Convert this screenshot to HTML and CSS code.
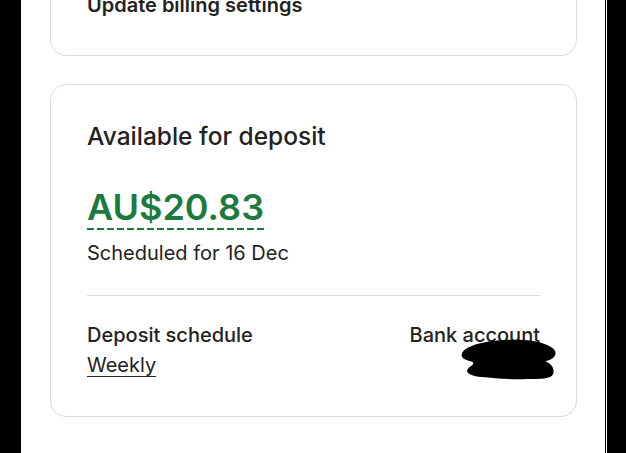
FILE: index.html
```html
<!DOCTYPE html>
<html>
<head>
<meta charset="utf-8">
<link rel="stylesheet" href="styles.css">
</head>
<body>
<div class="frame">
  <div class="edge-left"></div>
  <main class="page">
    <section class="card card-billing">
      <a class="billing-link">Update billing settings</a>
    </section>
    <section class="card card-deposit">
      <h2 class="title">Available for deposit</h2>
      <div class="amount"><span class="amount-value">AU$20.83</span></div>
      <p class="scheduled">Scheduled for 16 Dec</p>
      <hr class="divider">
      <div class="details">
        <div class="detail">
          <div class="detail-label">Deposit schedule</div>
          <a class="detail-link">Weekly</a>
        </div>
        <div class="detail detail-right">
          <div class="detail-label">Bank account</div>
          <div class="detail-value">
            <svg class="redact" width="98" height="42" viewBox="0 0 100 42" preserveAspectRatio="none">
              <path d="M12 7 C 24 2, 46 0, 66 1 C 80 2, 94 6, 97 12 C 99 17, 94 21, 87 22 C 93 25, 97 29, 95 35 C 93 40, 82 40, 68 40 C 52 41, 36 39, 22 38 C 11 37, 5 34, 8 30 C 10 27, 15 26, 13 23 C 6 21, 0 19, 2 15 C 3 11, 7 9, 12 7 Z" fill="#000"/>
            </svg>
          </div>
        </div>
      </div>
    </section>
  </main>
  <div class="edge-right"><div class="edge-line"></div><div class="edge-gap"></div><div class="edge-fill"></div></div>
</div>
</body>
</html>
```

FILE: styles.css
```css
html, body {
  margin: 0;
  padding: 0;
  background: #fff;
}
body {
  font-family: "Inter", "Roboto", "Liberation Sans", sans-serif;
  color: #222;
  width: 626px;
  height: 453px;
  overflow: hidden;
}
.frame {
  display: flex;
  width: 626px;
  height: 453px;
}
.edge-left {
  width: 21px;
  background: #000;
  flex: none;
}
.page {
  flex: 1;
  background: #fff;
  padding: 0 28px 0 29px;
  overflow: hidden;
}
.edge-right {
  display: flex;
  flex: none;
  width: 21px;
}
.edge-line { width: 1px; background: #000; }
.edge-gap { width: 1px; background: #fff; }
.edge-fill { flex: 1; background: #000; }

.card {
  border: 1px solid #dcdcdc;
  border-radius: 16px;
  background: #fff;
  padding: 0 36px;
}
.card-billing {
  margin-top: -60px;
  padding-top: 51px;
  padding-bottom: 37px;
}
.billing-link {
  display: block;
  font-size: 20px;
  line-height: 26px;
  font-weight: 600;
  color: #222;
}
.card-deposit {
  margin-top: 28px;
  padding-top: 36px;
  padding-bottom: 38px;
}
.title {
  margin: 0;
  font-size: 24.5px;
  line-height: 30px;
  font-weight: 500;
}
.amount {
  margin-top: 36px;
  line-height: 0;
}
.amount-value {
  display: inline-block;
  font-size: 36px;
  line-height: 40px;
  font-weight: 600;
  color: #1d7a3f;
  padding-bottom: 3px;
  background-image: linear-gradient(to right, #1d7a3f 70%, transparent 70%);
  background-size: 10px 2px;
  background-repeat: repeat-x;
  background-position: 0 100%;
}
.scheduled {
  margin: 10px 0 0;
  font-size: 20px;
  line-height: 26px;
}
.divider {
  margin: 29px 0 0;
  border: 0;
  border-top: 1px solid #ddd;
}
.details {
  display: flex;
  justify-content: space-between;
  margin-top: 26px;
}
.detail-label {
  font-size: 20px;
  line-height: 26px;
  font-weight: 500;
}
.detail-link {
  display: block;
  margin-top: 4px;
  font-size: 20px;
  line-height: 26px;
  text-decoration: underline;
  text-underline-offset: 4px;
  text-decoration-thickness: 1px;
}
.detail-right {
  text-align: right;
}
.detail-value {
  display: flex;
  justify-content: flex-end;
  margin-top: -9px;
  margin-right: -18px;
  margin-bottom: -8px;
}
.redact {
  display: block;
}
```
